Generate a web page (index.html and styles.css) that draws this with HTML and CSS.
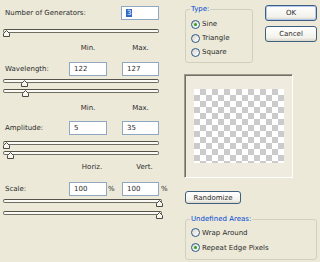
FILE: index.html
```html
<!DOCTYPE html>
<html lang="en">
<head>
    <meta charset="UTF-8">
    <title>Wave</title>
    <link rel="stylesheet" href="styles.css">
</head>
<body>
    <div class="dialog">
        <div class="params">
            <div class="field">
                <span class="field-label span-3">Number of Generators:</span>
                <span class="box box-wide"><span class="sel">3</span></span>
            </div>
            <div class="slider mt-9">
                <div class="track"></div>
                <svg class="thumb" style="left:0px" viewBox="0 0 7 7"><polygon points="0.5,3.5 3.5,0.5 6.5,3.5 6.5,6.5 0.5,6.5"/></svg>
            </div>

            <div class="heads"><span></span><span>Min.</span><span></span><span>Max.</span></div>
            <div class="field mt-9">
                <span class="field-label">Wavelength:</span>
                <span class="box">122</span>
                <span></span>
                <span class="box">127</span>
            </div>
            <div class="slider">
                <div class="track"></div>
                <svg class="thumb" style="left:18px" viewBox="0 0 7 7"><polygon points="0.5,3.5 3.5,0.5 6.5,3.5 6.5,6.5 0.5,6.5"/></svg>
            </div>
            <div class="slider">
                <div class="track"></div>
                <svg class="thumb" style="left:19px" viewBox="0 0 7 7"><polygon points="0.5,3.5 3.5,0.5 6.5,3.5 6.5,6.5 0.5,6.5"/></svg>
            </div>

            <div class="heads"><span></span><span>Min.</span><span></span><span>Max.</span></div>
            <div class="field mt-8">
                <span class="field-label">Amplitude:</span>
                <span class="box">5</span>
                <span></span>
                <span class="box">35</span>
            </div>
            <div class="slider mt-6">
                <div class="track"></div>
                <svg class="thumb" style="left:0px" viewBox="0 0 7 7"><polygon points="0.5,3.5 3.5,0.5 6.5,3.5 6.5,6.5 0.5,6.5"/></svg>
            </div>
            <div class="slider">
                <div class="track"></div>
                <svg class="thumb" style="left:4px" viewBox="0 0 7 7"><polygon points="0.5,3.5 3.5,0.5 6.5,3.5 6.5,6.5 0.5,6.5"/></svg>
            </div>

            <div class="heads heads-shift mt-3"><span></span><span>Horiz.</span><span></span><span>Vert.</span></div>
            <div class="field mt-10">
                <span class="field-label">Scale:</span>
                <span class="box">100</span>
                <span class="unit">%</span>
                <span class="box">100</span>
                <span class="unit unit-end">%</span>
            </div>
            <div class="slider slider-long">
                <div class="track"></div>
                <svg class="thumb" style="left:153px" viewBox="0 0 7 7"><polygon points="0.5,3.5 3.5,0.5 6.5,3.5 6.5,6.5 0.5,6.5"/></svg>
            </div>
            <div class="slider slider-long mt-4">
                <div class="track"></div>
                <svg class="thumb" style="left:153px" viewBox="0 0 7 7"><polygon points="0.5,3.5 3.5,0.5 6.5,3.5 6.5,6.5 0.5,6.5"/></svg>
            </div>
        </div>

        <div class="side">
            <div class="side-top">
                <fieldset class="group type-group">
                    <legend>Type:</legend>
                    <label class="radio"><span class="radio-dot on"></span>Sine</label>
                    <label class="radio"><span class="radio-dot"></span>Triangle</label>
                    <label class="radio"><span class="radio-dot"></span>Square</label>
                </fieldset>
                <div class="buttons">
                    <button class="btn btn-default">OK</button>
                    <button class="btn">Cancel</button>
                </div>
            </div>

            <div class="preview">
                <div class="checker"></div>
            </div>

            <button class="btn btn-random">Randomize</button>

            <fieldset class="group areas-group">
                <legend>Undefined Areas:</legend>
                <label class="radio radio-tall"><span class="radio-dot"></span>Wrap Around</label>
                <label class="radio radio-tall"><span class="radio-dot on"></span>Repeat Edge Pixels</label>
            </fieldset>
        </div>
    </div>
</body>
</html>
```

FILE: styles.css
```css
* {
    box-sizing: border-box;
}
body {
    margin: 0;
    background-color: #ece9d8;
    font-family: "DejaVu Sans", Verdana, sans-serif;
    font-size: 7px;
    color: #2b2b2b;
}
.dialog {
    display: flex;
    width: 320px;
    height: 262px;
    overflow: hidden;
}

/* left column: numeric fields and sliders */
.params {
    width: 184px;
    padding: 6px 0 0 3px;
}
.field,
.heads {
    display: grid;
    grid-template-columns: 66px 38px 15px 37px 1fr;
}
.field {
    height: 14px;
}
.field-label {
    align-self: center;
    padding-left: 2px;
    white-space: nowrap;
}
.span-3 {
    grid-column: span 3;
}
.box {
    display: flex;
    align-items: center;
    background-color: #fff;
    border: 1px solid #8fa7c0;
    padding-left: 4px;
}
.box-wide {
    margin-left: -1px;
    width: 38px;
}
.sel {
    background-color: #316ac5;
    color: #fff;
    padding: 0 1px;
    line-height: 8px;
}
.unit {
    align-self: center;
    padding-left: 1px;
}
.unit-end {
    padding-left: 2px;
}
.heads {
    height: 10px;
    line-height: 10px;
    margin-top: 6px;
    text-align: center;
}
.heads-shift span {
    padding-left: 8px;
}

.slider {
    position: relative;
    width: 156px;
    height: 8px;
    margin-top: 2px;
}
.field + .slider {
    margin-top: 3px;
}
.slider-long {
    width: 159px;
}
.track {
    height: 4px;
    border: 1px solid #6f6d62;
    border-top-color: #55534a;
    border-radius: 2px;
    background-color: #fbfaf5;
}
.thumb {
    position: absolute;
    top: 1px;
    width: 7px;
    height: 7px;
}
.thumb polygon {
    fill: #f6f5ef;
    stroke: #4b4a42;
    stroke-width: 1;
}

.mt-3 { margin-top: 3px; }
.mt-4 { margin-top: 4px; }
.mt-6 { margin-top: 6px; }
.field + .mt-6 { margin-top: 6px; }
.mt-8 { margin-top: 8px; }
.mt-9 { margin-top: 9px; }
.field + .mt-9 { margin-top: 9px; }
.mt-10 { margin-top: 10px; }

/* right column */
.side {
    width: 136px;
}
.side-top {
    display: flex;
    height: 63px;
}
.group {
    margin: 5px 0 0 1px;
    padding: 4px 0 3px 5px;
    border: 1px solid #d0d0bf;
    border-radius: 3px;
    min-width: 0;
}
.group legend {
    padding: 0 1px;
    margin-left: -1px;
    line-height: 8px;
    color: #0046d5;
}
.type-group {
    width: 68px;
    height: 58px;
}
.radio {
    display: flex;
    align-items: center;
    gap: 2px;
    height: 14px;
}
.radio-tall {
    height: 15px;
}
.radio-dot {
    display: flex;
    align-items: center;
    justify-content: center;
    width: 9px;
    height: 9px;
    border: 1px solid #2a5a8a;
    border-radius: 50%;
    background: linear-gradient(135deg, #d8d5ca, #fff);
}
.radio-dot.on::after {
    content: "";
    width: 3px;
    height: 3px;
    border-radius: 50%;
    background-color: #21a121;
}

.buttons {
    display: flex;
    flex-direction: column;
    gap: 5px;
    margin: 5px 0 0 12px;
}
.btn {
    font: inherit;
    color: #2b2b2b;
    width: 52px;
    height: 16px;
    padding: 0;
    border: 1px solid #3f5f80;
    border-radius: 3px;
    background: linear-gradient(#ffffff, #f3f2ec 75%, #d9d5c8);
}
.btn-default {
    box-shadow: inset 0 0 0 1px #b4c8ee;
}
.btn-random {
    display: block;
    width: 56px;
    height: 13px;
    margin: 13px 0 0 1px;
}

.preview {
    display: flex;
    justify-content: center;
    align-items: center;
    width: 109px;
    height: 104px;
    margin-top: 11px;
    border: 1px solid;
    border-color: #9d9a8c #fff #fff #9d9a8c;
    box-shadow: inset 1px 1px 0 #716f64;
    background-color: #efecdf;
}
.checker {
    width: 90px;
    height: 74px;
    background: repeating-conic-gradient(#cbcbcb 0 25%, #fff 0 50%) 0 0 / 12px 12px;
}

.areas-group {
    width: 132px;
    margin-top: 11px;
    padding-top: 2px;
    padding-bottom: 4px;
}
```
